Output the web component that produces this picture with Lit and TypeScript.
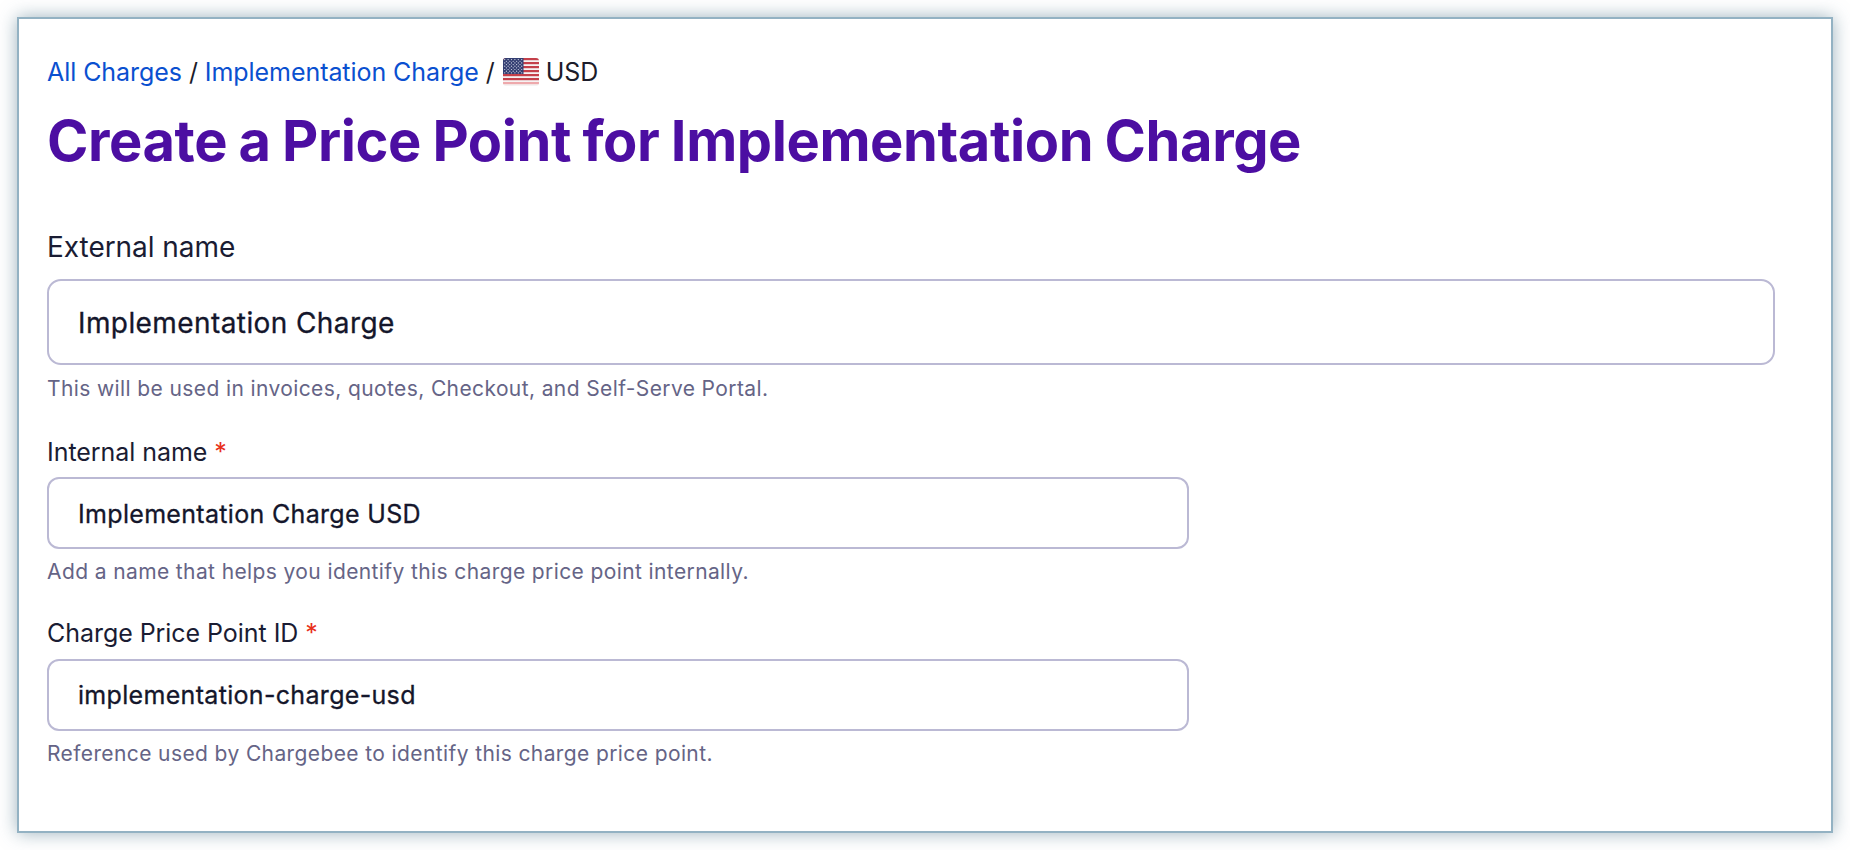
import { LitElement, html, css, svg } from "lit";
import { customElement } from "lit/decorators.js";

const stars = () => {
  const out = [];
  for (let r = 0; r < 9; r++) {
    const n = r % 2 ? 5 : 6;
    for (let c = 0; c < n; c++) {
      out.push(svg`<circle cx=${(r % 2 ? 3.4 : 1.7) + c * 3.4} cy=${1.6 + r * 1.65} r="0.62" fill="#d5d9e8"></circle>`);
    }
  }
  return out;
};

@customElement("app-root")
export class AppRoot extends LitElement {
  static styles = css`
    :host { display: block; padding: 17px; background: #fff; font-family: Inter, "Liberation Sans", sans-serif; }
    .card { box-sizing: border-box; width: 1816px; height: 816px; border: 2px solid #93b2c3; background: #fff; box-shadow: 0 0 17px rgba(75, 115, 135, 0.55); padding: 35px 28px 0; }
    .crumbs { display: flex; align-items: center; height: 36px; font-size: 25px; letter-spacing: -0.06px; color: #1c1c2a; white-space: pre; }
    .crumbs a { color: #0a50d0; text-decoration: none; }
    .flag { width: 36px; height: 28px; margin-right: 7px; margin-left: 1px; display: block; }
    h1 { margin: 15px 0 0; font-size: 56px; line-height: 72px; font-weight: 700; color: #4c0ea2; letter-spacing: -0.42px; word-spacing: -1.4px; }
    .field { display: flex; flex-direction: column; }
    .ext { margin-top: 54px; }
    .int { margin-top: 34px; }
    .pid { margin-top: 32px; }
    label { font-size: 28px; line-height: 32px; color: #1a1c33; margin-bottom: 16px; font-weight: 400; letter-spacing: -0.05px; }
    .small-label { font-size: 25px; margin-bottom: 10px; line-height: 30px; }
    .pid .small-label { margin-bottom: 11px; }
    .req { color: #e8301a; }
    .box { box-sizing: border-box; border: 2px solid #bbb9d4; border-radius: 12px; display: flex; align-items: center; padding: 2px 0 0 29px; color: #14162b; font-weight: 400; -webkit-text-stroke: 0.3px #14162b; }
    .pid .box { padding-top: 0; }
    .big { width: 1728px; height: 86px; font-size: 28px; border-radius: 14px; letter-spacing: 0.41px; }
    .mid { width: 1142px; height: 72px; font-size: 25px; letter-spacing: 0.32px; }
    .help { font-size: 21px; line-height: 28px; color: #656486; margin-top: 9px; letter-spacing: 0.39px; }
    .big + .help { margin-top: 10px; }
  `;

  render() {
    return html`<div class="card">
      <div class="crumbs"><a>All Charges</a> / <a>Implementation Charge</a> / <svg class="flag" viewBox="0 0 36 28">
        <defs><clipPath id="f"><rect width="36" height="28" rx="3"></rect></clipPath></defs>
        <g clip-path="url(#f)">
          <rect width="36" height="28" fill="#f6f2f2"></rect>
          ${[0, 4, 8, 12, 16, 20, 24].map((y, i) => svg`<rect y=${y} width="36" height="2.2" fill=${i === 6 ? "#eea9ac" : "#c4404a"}></rect>`)}
          <rect width="20.5" height="16" fill="#343f72"></rect>
          ${stars()}
        </g></svg>USD</div>
      <h1>Create a Price Point for Implementation Charge</h1>
      <div class="field ext">
        <label>External name</label>
        <div class="box big">Implementation Charge</div>
        <div class="help">This will be used in invoices, quotes, Checkout, and Self-Serve Portal.</div>
      </div>
      <div class="field int">
        <label class="small-label">Internal name <span class="req">*</span></label>
        <div class="box mid">Implementation Charge USD</div>
        <div class="help">Add a name that helps you identify this charge price point internally.</div>
      </div>
      <div class="field pid">
        <label class="small-label">Charge Price Point ID <span class="req">*</span></label>
        <div class="box mid">implementation-charge-usd</div>
        <div class="help">Reference used by Chargebee to identify this charge price point.</div>
      </div>
    </div>`;
  }
}
